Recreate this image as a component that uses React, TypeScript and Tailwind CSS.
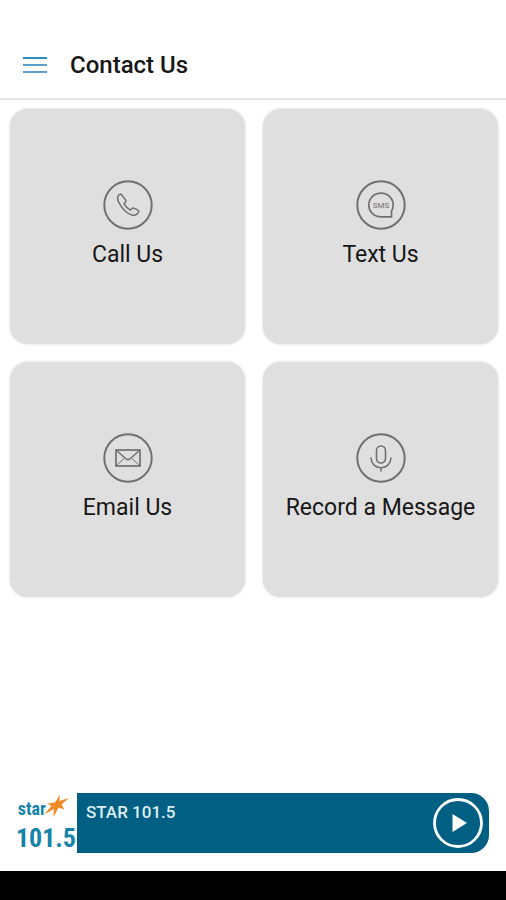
import React from 'react';

interface ContactOption {
  label: string;
  icon: React.ReactNode;
}

const PhoneIcon = () => <svg viewBox="0 0 50 50" className="w-[50px] h-[50px]" fill="none" stroke="#707070" strokeLinecap="round" strokeLinejoin="round" aria-hidden="true">
    <circle cx="25" cy="25" r="23.700" strokeWidth="2" />
    <path strokeWidth="1.500" d="M17 14.200C14.400 15 13.900 18.500 15.600 22C18.600 28.500 24.500 34.400 29.500 35.200C32.300 35.600 34.700 34 35.600 31.800C35.900 31.100 35.500 30.500 34.900 30.200L30.800 28.200C30 27.900 29.400 28 28.900 28.600L27.400 30.200C25 29 22.300 26.200 21 23.700L22.600 22C23.100 21.400 23.100 20.800 22.700 20.100L18.600 14.800C18.100 14.200 17.600 14 17 14.200Z" />
  </svg>;

const SmsIcon = () => <svg viewBox="0 0 50 50" className="w-[50px] h-[50px]" fill="none" stroke="#707070" strokeLinejoin="round" aria-hidden="true">
    <circle cx="25" cy="25" r="23.700" strokeWidth="2" />
    <path strokeWidth="1.700" d="M35.500 36.800H25C18 36.800 12.800 31.600 12.800 25C12.800 18.300 18.100 13.200 25 13.200C31.800 13.200 37.200 18.300 37.200 24.800C37.200 27.900 36.400 29.800 35.500 31.400Z" />
    <text x="25" y="28" textAnchor="middle" fill="#707070" stroke="none" fontSize="8" fontWeight="400" fontFamily="Roboto, sans-serif">SMS</text>
  </svg>;

const MailIcon = () => <svg viewBox="0 0 50 50" className="w-[50px] h-[50px]" fill="none" stroke="#707070" aria-hidden="true">
    <circle cx="25" cy="25" r="23.700" strokeWidth="2" />
    <rect x="13" y="17" width="24" height="16" strokeWidth="1.700" />
    <path strokeWidth="1.500" d="M13.500 17.500L23.500 26.200Q25 27.400 26.500 26.200L36.500 17.500" />
    <path strokeWidth="1" d="M13.500 32.500L21.500 25M36.500 32.500L28.500 25" />
  </svg>;

const MicIcon = () => <svg viewBox="0 0 50 50" className="w-[50px] h-[50px]" fill="none" stroke="#707070" strokeWidth="1.600" strokeLinecap="round" aria-hidden="true">
    <circle cx="25" cy="25" r="23.700" strokeWidth="2" />
    <rect x="20.500" y="13" width="9" height="17" rx="4.500" />
    <path d="M15 25C15.400 31 19.500 34.800 25 34.800C30.500 34.800 34.600 31 35 25M25 35V38" />
  </svg>;

const StationLogo = () => <svg viewBox="0 0 60 60" className="w-[60px] h-[60px] shrink-0 bg-white" role="img" aria-label="Star 101.5">
    <g fill="#1683a8" fontFamily="'Roboto Condensed', 'Liberation Sans Narrow', sans-serif" fontWeight="700">
      <text x="29" y="22" textAnchor="end" fontSize="18">star</text>
      <text x="59" y="54" textAnchor="end" fontSize="26">101.5</text>
    </g>
    <path fill="#f08a24" d="M43 1.500L42.300 8L52 5L44.500 11.500L47.500 16.500L41.500 14.500L36.500 24L36.800 16L27 21.500L34.500 13L30 10.500L38 9.500Z" />
  </svg>;

const options: ContactOption[] = [
  { label: 'Call Us', icon: <PhoneIcon /> },
  { label: 'Text Us', icon: <SmsIcon /> },
  { label: 'Email Us', icon: <MailIcon /> },
  { label: 'Record a Message', icon: <MicIcon /> }
];

export default function App() {
  return <div className="min-h-screen flex flex-col bg-white font-[Roboto,sans-serif] text-[#171717]">
      <header className="flex items-center gap-[23px] h-[100px] pt-8 px-[23px] border-b-2 border-[#e6e6e6]">
        <button type="button" aria-label="Open menu" className="flex flex-col gap-[5px]">
          <span className="block w-6 h-0.5 bg-[#2b8fbd]" />
          <span className="block w-6 h-0.5 bg-[#5ba3ce]" />
          <span className="block w-6 h-0.5 bg-[#5ba3ce]" />
        </button>
        <h1 className="text-2xl font-medium">Contact Us</h1>
      </header>
      <main className="flex-1 pl-[10px] pr-2 pt-[9px]">
        <div className="grid grid-cols-2 gap-[18px]">
          {options.map(option => <button key={option.label} type="button" className="aspect-square flex flex-col items-center justify-center gap-[9px] pb-[3px] rounded-[18px] bg-[#dfdfdf] shadow-[0_0_3px_#d4d4d4]">
              {option.icon}
              <span className="text-[23px] leading-8 whitespace-nowrap">
                {option.label}
              </span>
            </button>)}
        </div>
      </main>
      <footer>
        <div className="flex mx-[17px] mb-[18px] h-[60px]">
          <StationLogo />
          <div className="flex-1 flex items-center justify-between pl-[9px] pr-[6px] bg-[#005f83] rounded-r-[18px]">
            <p className="self-start pt-[7px] text-[17px] leading-6 font-medium text-[#dfedf5]">
              STAR 101.5
            </p>
            <button type="button" aria-label="Play" className="w-[50px] h-[50px]">
              <svg viewBox="0 0 50 50" className="w-full h-full" aria-hidden="true">
                <circle cx="25" cy="25" r="23.500" fill="none" stroke="#fff" strokeWidth="2.800" />
                <path fill="#fff" d="M19.500 16L34 25L19.500 34Z" />
              </svg>
            </button>
          </div>
        </div>
        <div className="h-[29px] bg-black" />
      </footer>
    </div>;
}
